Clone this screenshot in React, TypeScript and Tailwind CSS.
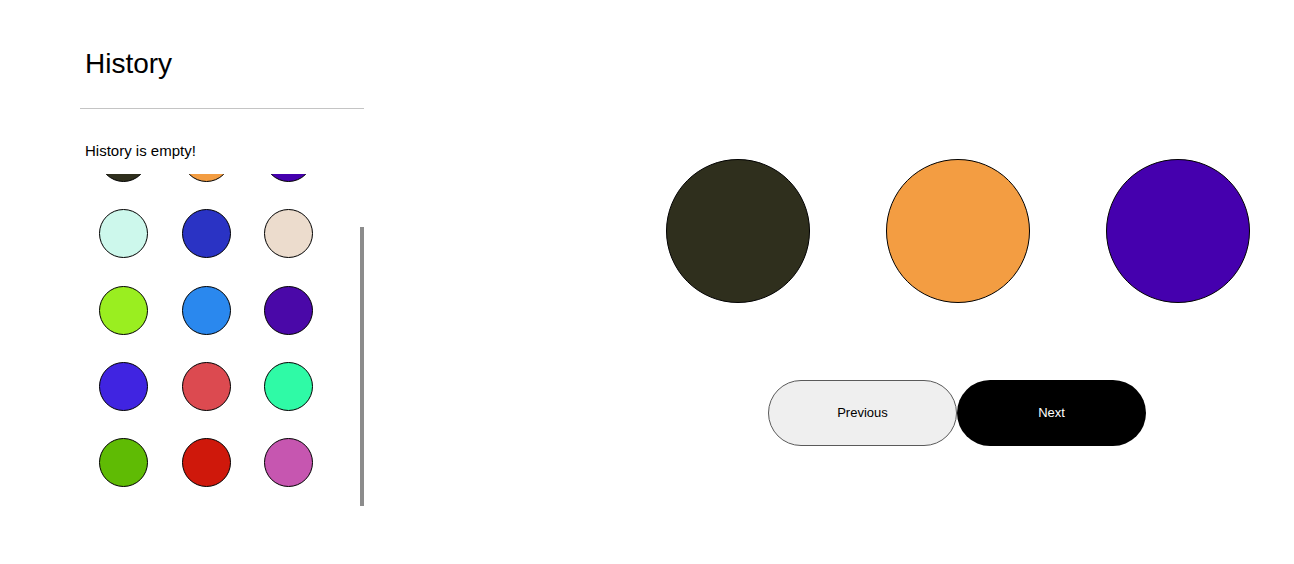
const historyColors = [
  ['#2f2f1d', '#f39d42', '#4500ae'],
  ['#cdf8ec', '#2a33c4', '#ecdccd'],
  ['#9aee20', '#2a88ee', '#4a08a8'],
  ['#4024e1', '#dc4a50', '#2ffaa6'],
  ['#5fbb04', '#cf180b', '#c656b0'],
];

const current = ['#2f2f1d', '#f39d42', '#4500ae'];

function Swatch({ color, size }: { color: string; size: number }) {
  return (
    <div
      className="rounded-full border border-black"
      style={{ background: color, width: size, height: size }}
    />
  );
}

export default function App() {
  return (
    <div className="flex min-h-[564px] bg-white text-black" style={{ fontFamily: '"Liberation Sans", Arial, sans-serif' }}>
      {/* left: history panel */}
      <aside className="ml-[80px] w-[284px] shrink-0 pt-[48px]">
        <h2 className="pl-[5px] text-[28px] leading-[32px] font-normal">History</h2>
        <hr className="mt-[28px] border-0 border-t border-[#c4c4c4]" />
        <p className="mt-[33px] pl-[5px] text-[15px] leading-[17px]">History is empty!</p>

        <div className="mt-[15px] flex h-[332px]">
          <div className="flex-1 overflow-hidden">
            <div className="-mt-[41px] ml-[19px] grid grid-cols-[83px_82px_49px] gap-y-[27.25px]">
              {historyColors.flat().map((c, i) => (
                <Swatch key={i} color={c} size={49} />
              ))}
            </div>
          </div>
          {/* scrollbar */}
          <div className="w-[4px] shrink-0 pt-[53px]">
            <div className="h-[279px] bg-[#8c8c8c]" />
          </div>
        </div>
      </aside>

      {/* right: current palette */}
      <main className="ml-[256px] flex flex-1 flex-col items-center pt-[159px]">
        <div className="flex gap-[76px] pl-[1px]">
          {current.map((c) => (
            <Swatch key={c} color={c} size={144} />
          ))}
        </div>
        <div className="mt-[77px] flex">
          <button className="h-[66px] w-[189px] rounded-full border border-[#5a5a5a] bg-[#efefef] text-[13px] text-black">
            Previous
          </button>
          <button className="h-[66px] w-[189px] rounded-full bg-black text-[13px] text-white">
            Next
          </button>
        </div>
      </main>
    </div>
  );
}
